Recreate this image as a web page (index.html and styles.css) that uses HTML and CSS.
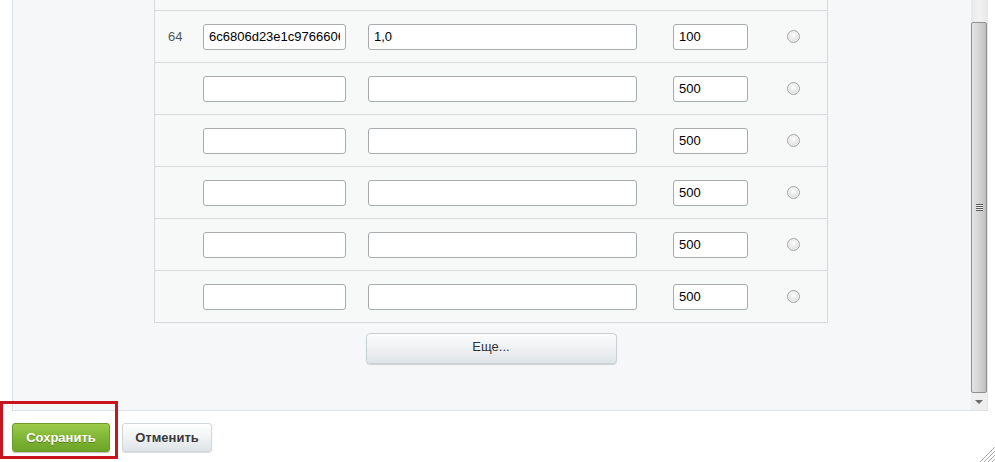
FILE: index.html
```html
<!DOCTYPE html>
<html lang="ru">
<head>
<meta charset="utf-8">
<title>Форма</title>
<link rel="stylesheet" href="styles.css">
</head>
<body>
<div class="frame">
  <div class="content">
    <div class="table">
      <div class="row-tail"></div>
      <div class="row">
        <span class="num">64</span>
        <input class="f1" type="text" value="6c6806d23e1c9766606d">
        <input class="f2" type="text" value="1,0">
        <input class="f3" type="text" value="100">
        <span class="radio"></span>
      </div>
      <div class="row">
        <span class="num"></span>
        <input class="f1" type="text" value="">
        <input class="f2" type="text" value="">
        <input class="f3" type="text" value="500">
        <span class="radio"></span>
      </div>
      <div class="row">
        <span class="num"></span>
        <input class="f1" type="text" value="">
        <input class="f2" type="text" value="">
        <input class="f3" type="text" value="500">
        <span class="radio"></span>
      </div>
      <div class="row">
        <span class="num"></span>
        <input class="f1" type="text" value="">
        <input class="f2" type="text" value="">
        <input class="f3" type="text" value="500">
        <span class="radio"></span>
      </div>
      <div class="row">
        <span class="num"></span>
        <input class="f1" type="text" value="">
        <input class="f2" type="text" value="">
        <input class="f3" type="text" value="500">
        <span class="radio"></span>
      </div>
      <div class="row">
        <span class="num"></span>
        <input class="f1" type="text" value="">
        <input class="f2" type="text" value="">
        <input class="f3" type="text" value="500">
        <span class="radio"></span>
      </div>
    </div>
    <div class="more-wrap"><button class="more" type="button">Еще...</button></div>
  </div>
  <div class="scrollbar">
    <div class="track-top"></div>
    <div class="thumb"><span class="grip"></span></div>
    <div class="arrow-down"><span class="tri"></span></div>
  </div>
</div>
<div class="actions">
  <button class="btn save" type="button">Сохранить</button>
  <button class="btn cancel" type="button">Отменить</button>
  <span class="highlight"></span>
</div>
<span class="resize">
  <svg width="20" height="16" viewBox="0 0 20 16"><g stroke="#a9a9a9" stroke-width="1"><line x1="5" y1="16" x2="20" y2="1"/><line x1="9" y1="16" x2="20" y2="5"/><line x1="13" y1="16" x2="20" y2="9"/><line x1="17" y1="16" x2="20" y2="13"/></g></svg>
</span>
</body>
</html>
```
FILE: styles.css
```css
* { box-sizing: border-box; }
html, body { margin: 0; padding: 0; }
body {
  width: 995px;
  height: 462px;
  overflow: hidden;
  background: #fff;
  font-family: "Liberation Sans", Arial, sans-serif;
  font-size: 13px;
  color: #000;
  position: relative;
}
.frame {
  margin-left: 12px;
  width: 976px;
  height: 411px;
  display: flex;
  background: #f5f7f8;
  border-left: 1px solid #dde1e3;
  border-right: 1px solid #e4e6e7;
  border-bottom: 1px solid #dde1e3;
}
.content {
  flex: 1;
  padding-left: 141px;
}
.table {
  width: 674px;
  border-left: 1px solid #d6dadc;
  border-right: 1px solid #d6dadc;
  border-bottom: 1px solid #d6dadc;
  background: #f7f9f9;
}
.row-tail {
  height: 11px;
  border-bottom: 1px solid #d6dadc;
}
.row {
  height: 52px;
  display: flex;
  align-items: center;
  border-bottom: 1px solid #d6dadc;
}
.row:last-child { border-bottom: none; height: 51px; }
.num {
  width: 48px;
  padding-left: 13px;
  color: #555;
  font-size: 13px;
}
input {
  height: 26px;
  border: 1px solid #a7abae;
  border-radius: 3px;
  background: #fff;
  font-family: "Liberation Sans", Arial, sans-serif;
  font-size: 13px;
  color: #000;
  padding: 0 5px;
  margin: 0;
  outline: none;
}
.f1 { width: 143px; }
.f2 { width: 269px; margin-left: 22px; }
.f3 { width: 75px; margin-left: 36px; }
.radio {
  width: 13px;
  height: 13px;
  margin-left: 39px;
  border-radius: 50%;
  border: 1px solid #a3a3a3;
  background: radial-gradient(circle at 50% 40%, #fdfdfd 0%, #e6e6e6 55%, #cfcfcf 100%);
  box-shadow: inset 0 0 0 1px #f4f4f4;
}
.more-wrap {
  width: 674px;
  display: flex;
  justify-content: center;
  padding-top: 10px;
}
.more {
  width: 251px;
  height: 31px;
  border: 1px solid #c9d0d4;
  border-radius: 4px;
  background: linear-gradient(#fbfcfc, #eef1f2 50%, #dfe5e8);
  box-shadow: 0 1px 1px rgba(0,0,0,0.15);
  font-family: "Liberation Sans", Arial, sans-serif;
  font-size: 13px;
  color: #333;
  padding: 0 0 4px;
}
.scrollbar {
  width: 16px;
  margin-left: 1px;
  display: flex;
  flex-direction: column;
  background: #eaeaea;
}
.track-top { height: 22px; background: linear-gradient(90deg, #e8e8e8, #f2f2f2 50%, #e8e8e8); }
.thumb {
  height: 371px;
  border: 1px solid #8f8f8f;
  border-radius: 2px;
  background: linear-gradient(90deg, #e4e4e4, #d8d8d8 40%, #c8c8c8 80%, #bdbdbd);
  display: flex;
  align-items: center;
  justify-content: center;
}
.grip {
  width: 7px;
  height: 7px;
  background: repeating-linear-gradient(#5a5a5a 0 1px, #ececec 1px 2px);
}
.arrow-down {
  flex: 1;
  display: flex;
  align-items: center;
  justify-content: center;
  background: #eeeeee;
}
.tri {
  width: 0;
  height: 0;
  border-left: 4px solid transparent;
  border-right: 4px solid transparent;
  border-top: 4px solid #6a6a6a;
}
.actions {
  display: flex;
  gap: 12px;
  padding: 12px 0 0 12px;
}
.btn {
  height: 29px;
  border-radius: 3px;
  font-family: "Liberation Sans", Arial, sans-serif;
  font-size: 13px;
  font-weight: bold;
  padding: 0;
}
.save {
  width: 98px;
  border: 1px solid #6f9a26;
  background: linear-gradient(#9ccd4a, #80b535 50%, #6ea528);
  color: #fff;
  text-shadow: 0 1px 0 rgba(60,90,10,0.6);
  box-shadow: 0 1px 1px rgba(0,0,0,0.25);
}
.cancel {
  width: 90px;
  border: 1px solid #d0d6d9;
  background: linear-gradient(#ffffff, #f1f3f4 50%, #dde3e6);
  color: #3a3a3a;
  box-shadow: 0 1px 1px rgba(0,0,0,0.15);
}
.highlight {
  position: absolute;
  left: 0;
  top: 401px;
  width: 118px;
  height: 58px;
  border: 3px solid #c7141f;
  pointer-events: none;
}
.resize {
  position: absolute;
  right: 0;
  bottom: 0;
  width: 20px;
  height: 16px;
  display: block;
}
.resize svg { display: block; }
```
